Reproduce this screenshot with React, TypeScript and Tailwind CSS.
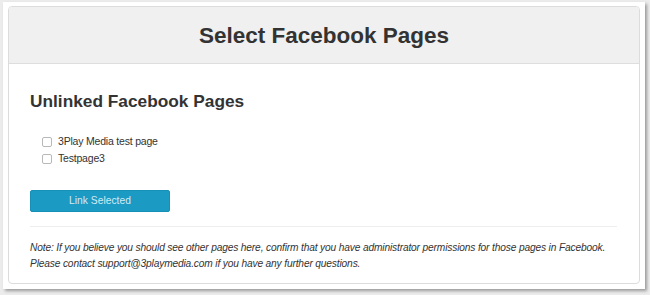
import React from "react";

export default function App() {
  return (
    <div className="w-[650px] h-[295px] bg-[#ececec] pt-[2px] pl-[3px] overflow-hidden" style={{ fontFamily: '"Liberation Sans", Arial, sans-serif' }}>
      <div className="w-[642px] h-[287px] bg-white shadow-[2px_2px_3px_rgba(0,0,0,0.35)] pt-[4px] pl-[5px]">
        <div className="w-[632px] h-[278px] border border-[#dcdcdc] rounded-[4px] overflow-hidden flex flex-col">
          <div className="h-[57px] shrink-0 bg-[#f0f0f0] border-b border-[#dedede] flex items-center justify-center pt-[2px]">
            <h1 className="text-[22.5px] font-bold text-[#333]">Select Facebook Pages</h1>
          </div>
          <div className="px-[21px] pt-[25px]">
            <h2 className="text-[17.3px] font-bold text-[#333] leading-[24px]">Unlinked Facebook Pages</h2>
            <div className="mt-[22px] pl-[12px] flex flex-col gap-[4px]">
              {["3Play Media test page", "Testpage3"].map((t) => (
                <label key={t} className="flex items-center h-[13px] text-[10.5px] tracking-[-0.2px] text-[#333]">
                  <span className="w-[10px] h-[10px] border border-[#b8b8b8] rounded-[2px] bg-white mr-[6px] inline-block shrink-0"></span>
                  {t}
                </label>
              ))}
            </div>
            <button className="mt-[25px] w-[140px] h-[22px] bg-[#1b9ac4] rounded-[2px] text-[10.3px] text-[#d2ebf4] flex items-center justify-center border border-[#1790b8]">
              Link Selected
            </button>
            <div className="mt-[14px] mr-[1px] border-t border-[#eeeeee]"></div>
            <p className="mt-[13px] text-[10.2px] tracking-[-0.15px] italic text-[#333] leading-[16px] whitespace-nowrap">
              Note: If you believe you should see other pages here, confirm that you have administrator permissions for those pages in Facebook.
              <br />
              Please contact support@3playmedia.com if you have any further questions.
            </p>
          </div>
        </div>
      </div>
    </div>
  );
}
